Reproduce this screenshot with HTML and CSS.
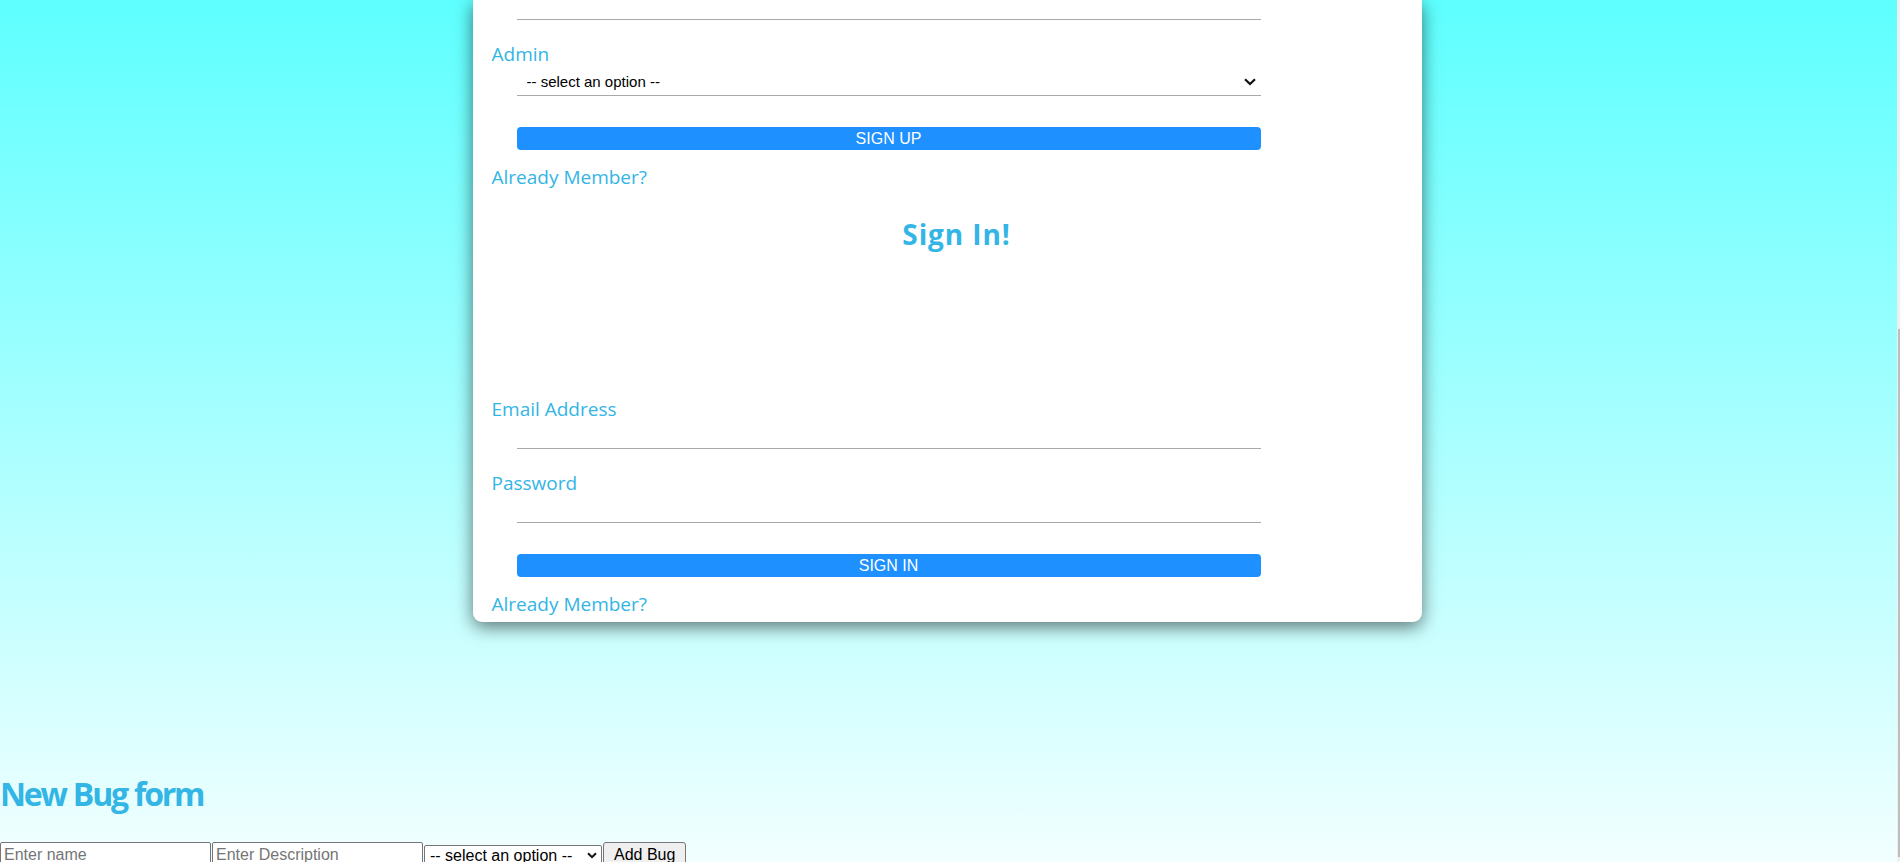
FILE: index.html
```html
<!DOCTYPE html>
<html lang="en">
<head>
<meta charset="utf-8">
<title>Bug Tracker</title>
<link rel="stylesheet" href="styles.css">
</head>
<body>
<div class="page">
  <div class="card">
    <form class="auth-form">
      <input class="field field-top" type="text">
      <label class="lbl">Admin</label>
      <div class="select-wrap">
        <select class="field field-select">
          <option>-- select an option --</option>
        </select>
        <svg class="chevron" width="12" height="8" viewBox="0 0 12 8" aria-hidden="true"><path d="M1 1.2 L6 6 L11 1.2" fill="none" stroke="#111" stroke-width="2.2"/></svg>
      </div>
      <button type="button" class="btn">SIGN UP</button>
      <p class="lbl link">Already Member?</p>
    </form>
    <h2 class="card-title">Sign In!</h2>
    <form class="auth-form">
      <label class="lbl lbl-first">Email Address</label>
      <input class="field" type="email">
      <label class="lbl">Password</label>
      <input class="field" type="password">
      <button type="button" class="btn">SIGN IN</button>
      <p class="lbl link">Already Member?</p>
    </form>
  </div>
  <section class="bug">
    <h1 class="bug-title">New Bug form</h1>
    <div class="bug-row">
      <input class="bug-input" type="text" placeholder="Enter name">
      <input class="bug-input" type="text" placeholder="Enter Description">
      <div class="bug-select-wrap">
        <select class="bug-select"><option>-- select an option --</option></select>
        <svg class="chevron chevron-sm" width="10" height="7" viewBox="0 0 10 7" aria-hidden="true"><path d="M1 1.2 L5 5.2 L9 1.2" fill="none" stroke="#111" stroke-width="2"/></svg>
      </div>
      <button type="button" class="bug-btn">Add Bug</button>
    </div>
  </section>
</div>
<div class="scrollbar"><div class="scrollbar-thumb"></div></div>
</body>
</html>
```
FILE: styles.css
```css
html {
  height: 100%;
  background: linear-gradient(to bottom, #5effff 0%, #f2ffff 100%);
}
body {
  margin: 0;
  height: 100%;
  overflow: hidden;
  font-family: "Open Sans", "Noto Sans", sans-serif;
}
.page {
  padding-right: 6px;
}
.card {
  width: 949px;
  margin: 0 auto;
  box-sizing: border-box;
  background: #fff;
  border-radius: 0 0 9px 9px;
  box-shadow: 0 5px 18px rgba(0, 0, 0, 0.55);
  padding: 0 0 5px 19px;
}
.auth-form {
  display: flex;
  flex-direction: column;
  margin: 0;
}
.lbl {
  display: block;
  margin: 21px 0 0;
  color: #33b5e5;
  font-size: 19px;
  line-height: 26px;
}
.lbl-first {
  margin-top: 0;
}
.link {
  margin-top: 14px;
}
.field {
  display: block;
  box-sizing: border-box;
  width: 80%;
  height: 27px;
  margin: 0 0 0 25px;
  padding: 0 8px;
  border: none;
  border-bottom: 1px solid #a9a9a9;
  border-radius: 0;
  background: #fff;
  font-family: "Liberation Sans", Arial, sans-serif;
  font-size: 15px;
  outline: none;
}
.field-top {
  height: 20px;
}
.select-wrap {
  position: relative;
  width: 80%;
  margin-left: 25px;
}
.field-select {
  width: 100%;
  height: 29px;
  margin: 0;
  padding: 0 24px 0 10px;
  color: #000;
  -webkit-appearance: none;
  appearance: none;
}
.chevron {
  position: absolute;
  right: 5px;
  top: 11px;
  pointer-events: none;
}
.btn {
  display: block;
  box-sizing: border-box;
  width: 80%;
  height: 23px;
  margin: 31px 0 0 25px;
  padding: 0;
  border: none;
  border-radius: 4px;
  background: #1e90ff;
  color: #fff;
  font-family: "Liberation Sans", Arial, sans-serif;
  font-size: 16px;
  line-height: 23px;
}
.card-title {
  margin: 25px 0 143px;
  text-align: center;
  color: #33b5e5;
  font-size: 28px;
  line-height: 38px;
  font-weight: 700;
  letter-spacing: 0.9px;
}
.bug-title {
  margin: 150px 0 0;
  color: #33b5e5;
  font-size: 32px;
  line-height: 43px;
  font-weight: 700;
  letter-spacing: -2.2px;
  word-spacing: 1px;
}
.bug-row {
  display: flex;
  align-items: flex-start;
  gap: 1px;
  margin-top: 27px;
}
.bug-input {
  box-sizing: border-box;
  width: 211px;
  height: 24px;
  margin: 0;
  padding: 2px 3px 0;
  border: 1px solid #767676;
  border-radius: 2px;
  background: #fff;
  font-family: "Liberation Sans", Arial, sans-serif;
  font-size: 16px;
}
.bug-input::placeholder {
  color: #757575;
}
.bug-select-wrap {
  position: relative;
  width: 178px;
  margin-top: 2px;
}
.bug-select {
  box-sizing: border-box;
  width: 100%;
  height: 22px;
  margin: 0;
  padding: 0 18px 0 5px;
  border: 1px solid #767676;
  border-radius: 2px;
  background: #fff;
  font-family: "Liberation Sans", Arial, sans-serif;
  font-size: 16px;
  color: #000;
  -webkit-appearance: none;
  appearance: none;
}
.chevron-sm {
  right: 5px;
  top: 8px;
}
.bug-btn {
  height: 24px;
  margin: 0;
  padding: 1px 10px 0;
  border: 1px solid #767676;
  border-radius: 3px;
  background: #efefef;
  font-family: "Liberation Sans", Arial, sans-serif;
  font-size: 16px;
  color: #000;
}
.scrollbar {
  position: fixed;
  top: 0;
  right: 0;
  width: 3px;
  height: 100%;
  background: #f0f0f0;
}
.scrollbar-thumb {
  position: absolute;
  top: 329px;
  bottom: 5px;
  right: 0;
  width: 2px;
  background: #bdbdbd;
}
```
